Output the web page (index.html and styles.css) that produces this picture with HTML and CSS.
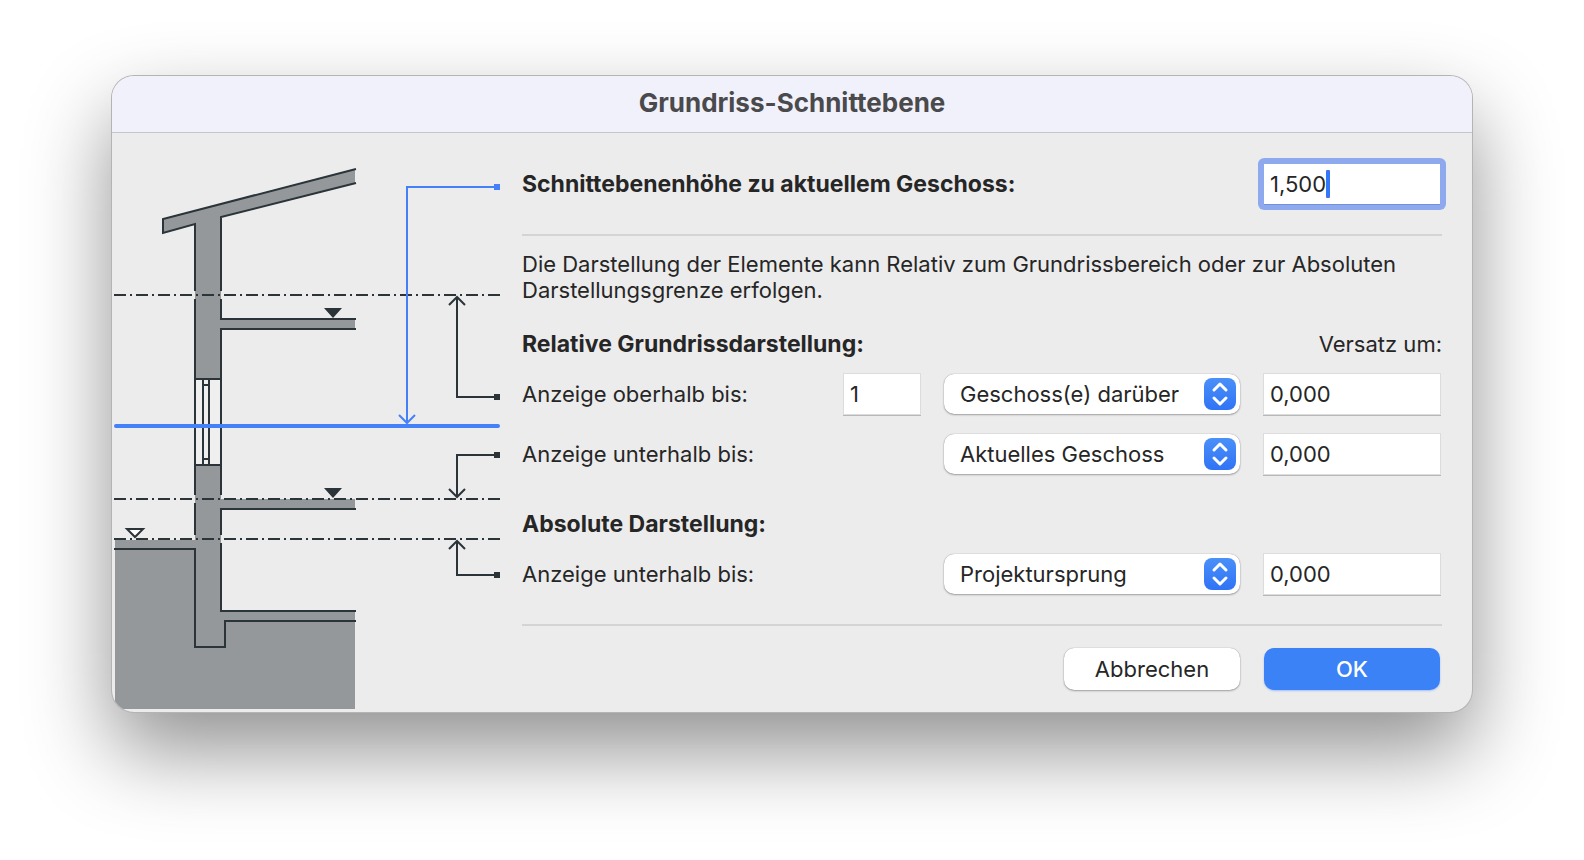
FILE: index.html
```html
<!DOCTYPE html>
<html lang="de">
<head>
    <meta charset="UTF-8">
    <meta name="viewport" content="width=device-width, initial-scale=1.0">
    <title>Grundriss-Schnittebene</title>
    <link rel="stylesheet" href="styles.css">
</head>
<body>
    <main class="dialog">
        <header class="titlebar">
            <h1>Grundriss-Schnittebene</h1>
        </header>

        <div class="content">
            <!-- Section through the building -->
            <svg class="diagram" width="390" height="579" viewBox="0 0 390 579" aria-hidden="true">
                <g class="fill">
                    <path d="M51 86L243 36V50L109 84V186H243V196H109V246H83V91L51 100Z"/>
                    <path d="M83 332H109V366H243V376H109V478H243V576H3V407H83Z"/>
                </g>
                <path class="glass" d="M83 246H109V332H83Z"/>
                <g class="line">
                    <path d="M244 36L51 86V100L83 91V158"/>
                    <path d="M244 50L109 84V158"/>
                    <path d="M109 166V186H244M244 196H109V362M83 166V362"/>
                    <path d="M83 246H109M83 332H109M91 246V332M97 246V332M91 252H97M91 326H97"/>
                    <path d="M83 370V402M244 376H109V402M109 410V478H244"/>
                    <path d="M2 416H83V514H113V488H244"/>
                </g>
                <path class="level" d="M2 162H388M2 366H388M2 406H388"/>
                <path class="mark" d="M212 175H230L221 185ZM212 355H230L221 365Z"/>
                <path class="mark-open" d="M15 396H31L23 404Z"/>
                <g class="line">
                    <path d="M385 264H345V164M337 172L345 164L353 172"/>
                    <path d="M385 322H345V364M337 356L345 364L353 356"/>
                    <path d="M385 442H345V408M337 416L345 408L353 416"/>
                </g>
                <path class="mark" d="M382 261H388V267H382ZM382 319H388V325H382ZM382 439H388V445H382Z"/>
                <path class="cut" d="M385 54H295V290M287 282L295 290L303 282"/>
                <path class="cut-end" d="M382 51H388V57H382Z"/>
                <path class="cut-plane" d="M4 293H386"/>
            </svg>

            <form class="form">
                <div class="row">
                    <label class="label strong" for="height">Schnittebenenhöhe zu aktuellem Geschoss:</label>
                    <div class="field focused">
                        <input type="text" id="height" value="1,500">
                        <span class="caret"></span>
                    </div>
                </div>

                <hr>

                <p class="note">Die Darstellung der Elemente kann Relativ zum Grundrissbereich oder zur Absoluten Darstellungsgrenze erfolgen.</p>

                <div class="heading">
                    <h2>Relative Grundrissdarstellung:</h2>
                    <span id="offset">Versatz um:</span>
                </div>
                <div class="row">
                    <label class="label" for="above">Anzeige oberhalb bis:</label>
                    <div class="field small">
                        <input type="text" id="above" value="1">
                    </div>
                    <div class="select">
                        <select aria-label="Anzeige oberhalb bis">
                            <option>Geschoss(e) darüber</option>
                        </select>
                        <svg viewBox="0 0 32 32"><path d="M10 12L16 6L22 12M10 20L16 26L22 20"/></svg>
                    </div>
                    <div class="field">
                        <input type="text" value="0,000" aria-labelledby="offset">
                    </div>
                </div>
                <div class="row">
                    <label class="label" for="below">Anzeige unterhalb bis:</label>
                    <div class="select">
                        <select id="below">
                            <option>Aktuelles Geschoss</option>
                        </select>
                        <svg viewBox="0 0 32 32"><path d="M10 12L16 6L22 12M10 20L16 26L22 20"/></svg>
                    </div>
                    <div class="field">
                        <input type="text" value="0,000" aria-labelledby="offset">
                    </div>
                </div>

                <div class="heading absolute">
                    <h2>Absolute Darstellung:</h2>
                </div>
                <div class="row">
                    <label class="label" for="origin">Anzeige unterhalb bis:</label>
                    <div class="select">
                        <select id="origin">
                            <option>Projektursprung</option>
                        </select>
                        <svg viewBox="0 0 32 32"><path d="M10 12L16 6L22 12M10 20L16 26L22 20"/></svg>
                    </div>
                    <div class="field">
                        <input type="text" value="0,000" aria-labelledby="offset">
                    </div>
                </div>

                <hr>

                <div class="buttons">
                    <button type="button">Abbrechen</button>
                    <button type="submit" class="primary">OK</button>
                </div>
            </form>
        </div>
    </main>
</body>
</html>
```
FILE: styles.css
```css
* {
    box-sizing: border-box;
}
body {
    min-height: 100vh;
    margin: 0;
    padding: 76px 112px;
    background: #fff;
    color: #262626;
    font-family: Inter, "Liberation Sans", sans-serif;
    font-size: 22px;
    font-optical-sizing: none;
    line-height: 26px;
}
.dialog {
    overflow: hidden;
    border-radius: 22px;
    background: #ececec;
    box-shadow: 0 0 0 1px #b4b4b4, 0 38px 84px rgba(0, 0, 0, 0.44);
}
.titlebar {
    display: flex;
    align-items: center;
    justify-content: center;
    height: 57px;
    padding-bottom: 3px;
    border-bottom: 1px solid #c6c6c8;
    background: #f1f1fb;
}
h1, h2, p {
    margin: 0;
}
h1 {
    color: #4a4a4c;
    font-size: 26px;
    font-weight: 700;
}
h2, .strong {
    font-size: 23px;
    font-weight: 700;
}
.content {
    display: flex;
    gap: 20px;
}

/* Diagram */
.diagram {
    flex: none;
}
.fill {
    fill: #94989b;
}
.glass {
    fill: #efefef;
}
.line, .level {
    fill: none;
    stroke: #2a3439;
    stroke-width: 2;
}
.level {
    stroke-dasharray: 12 4 2 4;
}
.mark {
    fill: #2a3439;
}
.mark-open {
    fill: #fff;
    stroke: #2a3439;
    stroke-width: 2;
}
.cut {
    fill: none;
    stroke: #4480fa;
    stroke-width: 2;
}
.cut-end {
    fill: #4480fa;
}
.cut-plane {
    stroke: #4480fa;
    stroke-width: 4;
    stroke-linecap: round;
}

/* Form */
.form {
    flex: 1;
    padding: 31px 30px 22px 0;
}
.row {
    display: flex;
    gap: 24px;
    align-items: center;
    height: 40px;
    padding-right: 2px;
}
.row + .row {
    margin-top: 20px;
}
.label {
    flex: 1;
}
hr {
    height: 2px;
    margin: 30px 0 0;
    border: 0;
    background: #d4d4d4;
}
.note {
    margin-top: 15px;
}
.heading {
    display: flex;
    justify-content: space-between;
    margin: 28px 0 17px;
}
.absolute {
    margin-top: 37px;
}
input, select, button {
    margin: 0;
    border: 0;
    color: inherit;
    font: inherit;
    font-optical-sizing: none;
}
.field {
    position: relative;
    width: 176px;
}
.small {
    width: 76px;
}
.field input {
    display: block;
    width: 100%;
    height: 40px;
    padding: 0 6px;
    background: #fff;
    outline: none;
    box-shadow: 0 0 0 1px #dcdcdc, 0 1px 0 1px #b8b8b8;
}
.focused {
    border-radius: 2px;
    box-shadow: 0 0 0 6px #8ea9ee;
}
.focused input {
    box-shadow: 0 1px 0 #7391d8;
}
.caret {
    position: absolute;
    top: 6px;
    left: 62px;
    width: 4px;
    height: 28px;
    border-radius: 1px;
    background: #3478f6;
}
.select {
    position: relative;
    width: 296px;
}
.select select {
    display: block;
    width: 100%;
    height: 40px;
    padding: 0 40px 0 16px;
    border-radius: 10px;
    background: #fff;
    appearance: none;
    box-shadow: 0 0 1px rgba(0, 0, 0, 0.4), 0 1px 2px rgba(0, 0, 0, 0.3);
}
.select svg {
    position: absolute;
    top: 4px;
    right: 4px;
    width: 32px;
    height: 32px;
    border-radius: 8px;
    background: linear-gradient(#4a90f8, #3073f5);
    fill: none;
    stroke: #fff;
    stroke-width: 3;
    stroke-linecap: round;
    stroke-linejoin: round;
    pointer-events: none;
}
.buttons {
    display: flex;
    gap: 24px;
    justify-content: flex-end;
    margin-top: 22px;
    padding-right: 2px;
}
button {
    width: 176px;
    height: 42px;
    border-radius: 10px;
    background: #fff;
    box-shadow: 0 0 1px rgba(0, 0, 0, 0.4), 0 1px 2px rgba(0, 0, 0, 0.3);
}
.primary {
    background: #3b82f7;
    color: #fff;
    font-weight: 500;
    box-shadow: 0 1px 2px rgba(59, 130, 247, 0.4);
}
```
